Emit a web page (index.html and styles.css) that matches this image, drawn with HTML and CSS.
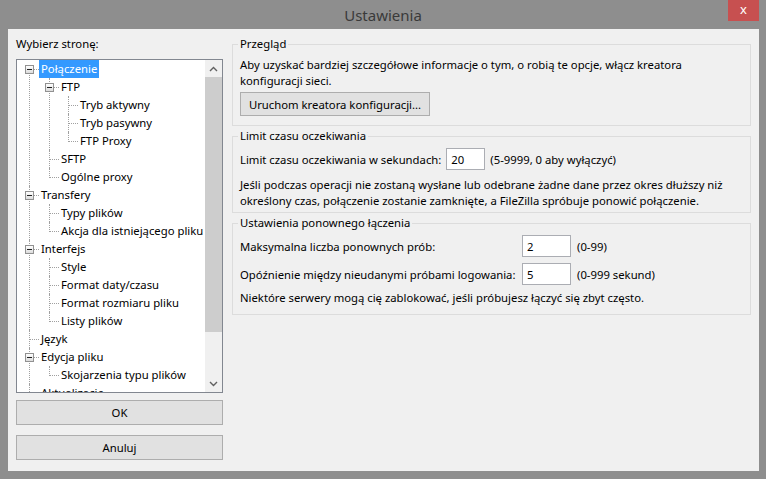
FILE: index.html
```html
<!DOCTYPE html>
<html lang="pl">
<head>
<meta charset="utf-8">
<title>Ustawienia</title>
<link rel="stylesheet" href="styles.css">
</head>
<body>
<div class="window">
  <div class="titlebar">
    <span class="title">Ustawienia</span>
    <span class="close">x</span>
  </div>

  <div class="client">
    <div class="side">
      <div class="side-label">Wybierz stronę:</div>
      <div class="treebox">
        <ul class="tree">
          <li><span class="exp"></span><span class="node sel">Połączenie</span>
            <ul>
              <li><span class="exp"></span><span class="node">FTP</span>
                <ul>
                  <li><span class="node">Tryb aktywny</span></li>
                  <li><span class="node">Tryb pasywny</span></li>
                  <li><span class="node">FTP Proxy</span></li>
                </ul>
              </li>
              <li><span class="node">SFTP</span></li>
              <li><span class="node">Ogólne proxy</span></li>
            </ul>
          </li>
          <li><span class="exp"></span><span class="node">Transfery</span>
            <ul>
              <li><span class="node">Typy plików</span></li>
              <li><span class="node">Akcja dla istniejącego pliku</span></li>
            </ul>
          </li>
          <li><span class="exp"></span><span class="node">Interfejs</span>
            <ul>
              <li><span class="node">Style</span></li>
              <li><span class="node">Format daty/czasu</span></li>
              <li><span class="node">Format rozmiaru pliku</span></li>
              <li><span class="node">Listy plików</span></li>
            </ul>
          </li>
          <li><span class="node">Język</span></li>
          <li><span class="exp"></span><span class="node">Edycja pliku</span>
            <ul>
              <li><span class="node">Skojarzenia typu plików</span></li>
            </ul>
          </li>
          <li class="more"><span class="node">Aktualizacje</span></li>
        </ul>
        <div class="vscroll">
          <div class="arrow">
            <svg width="9" height="6" viewBox="0 0 9 6"><polyline points="1,5 4.5,1.5 8,5" fill="none" stroke="#606060" stroke-width="1.4"/></svg>
          </div>
          <div class="track"><div class="thumb"></div></div>
          <div class="arrow">
            <svg width="9" height="6" viewBox="0 0 9 6"><polyline points="1,1 4.5,4.5 8,1" fill="none" stroke="#606060" stroke-width="1.4"/></svg>
          </div>
        </div>
      </div>
      <button class="btn btn-side">OK</button>
      <button class="btn btn-side btn-cancel">Anuluj</button>
    </div>

    <div class="pages">
      <fieldset class="group g-overview">
        <legend>Przegląd</legend>
        <p>Aby uzyskać bardziej szczegółowe informacje o tym, o robią te opcje, włącz kreatora konfiguracji sieci.</p>
        <button class="btn btn-wizard">Uruchom kreatora konfiguracji...</button>
      </fieldset>

      <fieldset class="group g-timeout">
        <legend>Limit czasu oczekiwania</legend>
        <div class="row">
          <span>Limit czasu oczekiwania w sekundach:</span>
          <input class="num num-short" type="text" value="20">
          <span>(5-9999, 0 aby wyłączyć)</span>
        </div>
        <p class="note">Jeśli podczas operacji nie zostaną wysłane lub odebrane żadne dane przez okres dłuższy niż określony czas, połączenie zostanie zamknięte, a FileZilla spróbuje ponowić połączenie.</p>
      </fieldset>

      <fieldset class="group g-retry">
        <legend>Ustawienia ponownego łączenia</legend>
        <div class="retry-grid">
          <span>Maksymalna liczba ponownych prób:</span>
          <input class="num" type="text" value="2">
          <span class="hint">(0-99)</span>
          <span>Opóźnienie między nieudanymi próbami logowania:</span>
          <input class="num" type="text" value="5">
          <span class="hint">(0-999 sekund)</span>
        </div>
        <p class="note">Niektóre serwery mogą cię zablokować, jeśli próbujesz łączyć się zbyt często.</p>
      </fieldset>
    </div>
  </div>
</div>
</body>
</html>
```

FILE: styles.css
```css
body {
    margin: 0;
    font-family: "Noto Sans", "Segoe UI", sans-serif;
    font-size: 11.3px;
    color: #000;
}

.window {
    width: 766px;
    height: 479px;
    background-color: #8e8e8e;
    display: flex;
    flex-direction: column;
}

/* pasek tytułu */
.titlebar {
    position: relative;
    height: 30px;
    display: flex;
    align-items: center;
    justify-content: center;
}
.title {
    font-size: 15px;
    color: #3a3a3a;
    margin-top: 1px;
}
.close {
    position: absolute;
    top: 0;
    right: 7px;
    width: 31px;
    height: 21px;
    background-color: #c75050;
    color: #fff;
    font-size: 13px;
    line-height: 19px;
    text-align: center;
}

.client {
    flex: 1;
    margin: 0 7px 8px 8px;
    background-color: #f0f0f0;
    display: flex;
    gap: 9px;
    padding: 7px 8px 11px 8px;
}

/* lewa kolumna */
.side {
    width: 207px;
    display: flex;
    flex-direction: column;
}
.side-label {
    line-height: 16px;
    margin-bottom: 7px;
}
.treebox {
    height: 334px;
    box-sizing: border-box;
    border: 1px solid #828790;
    background-color: #fff;
    display: flex;
}

.tree {
    flex: 1;
    overflow: hidden;
    list-style: none;
    margin: 0;
    padding: 0 0 0 12px;
    line-height: 18px;
    white-space: nowrap;
}
.tree ul {
    list-style: none;
    margin: 0;
    padding-left: 20px;
}
.tree ul ul {
    padding-left: 19px;
}
.tree li {
    position: relative;
}
.tree li::before {
    content: "";
    position: absolute;
    left: 0;
    top: 9px;
    width: 10px;
    border-top: 1px dotted #a0a0a0;
}
.tree li::after {
    content: "";
    position: absolute;
    left: 0;
    top: 0;
    bottom: 0;
    border-left: 1px dotted #a0a0a0;
}
.tree > li:first-child::after {
    top: 9px;
}
.tree li:last-child::after {
    bottom: auto;
    height: 10px;
}
.tree li.more::after {
    height: 18px;
}
.node {
    display: inline-block;
    margin-left: 10px;
    padding: 0 2px;
    line-height: 18px;
}
.node.sel {
    background-color: #3399ff;
    color: #fff;
}
.exp {
    position: absolute;
    z-index: 1;
    left: -4px;
    top: 5px;
    width: 9px;
    height: 9px;
    box-sizing: border-box;
    border: 1px solid #919191;
    background: linear-gradient(#ffffff, #dcdcdc);
}
.exp::after {
    content: "";
    position: absolute;
    left: 1px;
    top: 3px;
    width: 5px;
    height: 1px;
    background-color: #222;
}

/* pasek przewijania */
.vscroll {
    width: 17px;
    background-color: #f0f0f0;
    display: flex;
    flex-direction: column;
}
.arrow {
    height: 17px;
    display: flex;
    align-items: center;
    justify-content: center;
}
.track {
    flex: 1;
}
.thumb {
    height: 255px;
    background-color: #cdcdcd;
}

.btn {
    font-family: inherit;
    font-size: inherit;
    color: #000;
    background-color: #e1e1e1;
    border: 1px solid #adadad;
    height: 25px;
    padding: 0;
}
.btn-side {
    margin-top: 7px;
    width: 207px;
}
.btn-cancel {
    margin-top: 10px;
}

/* prawa kolumna */
.pages {
    flex: 1;
    display: flex;
    flex-direction: column;
    gap: 2px;
}
.group {
    margin: 0;
    border: 1px solid #dcdcdc;
    padding: 5px 8px 9px 7px;
    min-width: 0;
}
.group legend {
    padding: 0 2px;
    margin-left: -2px;
    line-height: 16px;
}
.group p {
    margin: 0;
    line-height: 16px;
}
.btn-wizard {
    display: block;
    margin-top: 3px;
    width: 190px;
    height: 24px;
}

.g-timeout {
    padding-top: 4px;
    padding-bottom: 3px;
}
.row {
    display: flex;
    align-items: center;
    gap: 5px;
}
.num {
    box-sizing: border-box;
    height: 22px;
    width: 49px;
    border: 1px solid #abadb3;
    background-color: #fff;
    font-family: inherit;
    font-size: inherit;
    padding: 0 4px;
    margin: 0;
}
.num-short {
    width: 39px;
}
.g-timeout .note {
    margin-top: 7px;
}

.g-retry {
    padding-top: 4px;
    padding-bottom: 8px;
}
.retry-grid {
    display: grid;
    grid-template-columns: 282px 49px auto;
    row-gap: 6px;
    align-items: center;
}
.hint {
    margin-left: 6px;
}
.g-retry .note {
    margin-top: 5px;
}
```
